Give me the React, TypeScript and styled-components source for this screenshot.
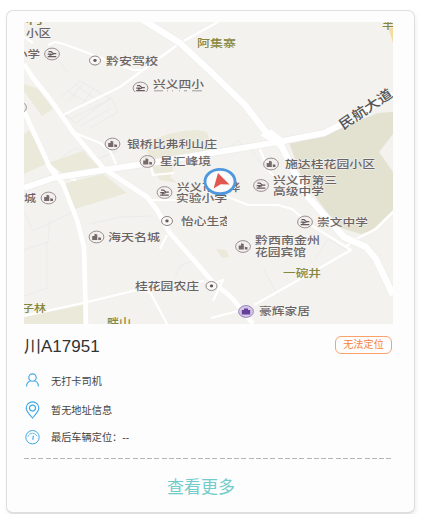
import React from "react";
import styled, { createGlobalStyle } from "styled-components";

const GlobalStyle = createGlobalStyle`
  * { box-sizing: border-box; }
  body {
    margin: 0;
    background: #fff;
    font-family: "Liberation Sans", "Noto Sans CJK SC", sans-serif;
    color: #333;
  }
`;

const Card = styled.article`
  width: 409px;
  height: 504px;
  margin: 10px 0 0 6px;
  padding: 11px 20px 0 17px;
  display: flex;
  flex-direction: column;
  background: #fdfdfd;
  border: 1px solid #dedfdf;
  border-bottom-width: 2px;
  border-radius: 7px;
  box-shadow: 1px 2px 4px rgba(0, 0, 0, 0.07);
`;

const MapView = styled.svg`
  display: block;
  width: 369px;
  height: 302px;
  flex: none;
  background: #f3f2ee;
`;

const Header = styled.header`
  display: flex;
  justify-content: space-between;
  align-items: flex-start;
  height: 43px;
  padding-top: 12px;
`;

const Plate = styled.h2`
  margin: 0;
  font-size: 17px;
  line-height: 22px;
  font-weight: 400;
  white-space: nowrap;
`;

const Status = styled.span`
  width: 57px;
  height: 18px;
  margin-right: 2px;
  border: 1px solid #fba16a;
  border-radius: 6px;
  color: #f6813c;
  font-size: 10.2px;
  line-height: 16px;
  text-align: center;
`;

const Details = styled.ul`
  list-style: none;
  margin: 0;
  padding: 0;
  display: flex;
  flex-direction: column;
  height: 91px;
`;

const Detail = styled.li<{ $height: number }>`
  display: flex;
  align-items: center;
  gap: 10px;
  height: ${(p) => p.$height}px;
  font-size: 10.2px;
  color: #444;
  white-space: nowrap;
`;

const LineIcon = styled.svg`
  width: 17px;
  height: 18px;
  fill: none;
  stroke: #43a9e5;
  stroke-width: 1.15;
`;

const Divider = styled.div`
  flex: none;
  width: 370px;
  height: 1px;
  background: repeating-linear-gradient(90deg, #b5b5b5 0 5px, transparent 5px 7.25px);
`;

const MoreButton = styled.button`
  align-self: center;
  margin: 16px 0 0;
  padding: 0;
  transform: translateX(-8px);
  border: 0;
  background: none;
  color: #70cccb;
  font: inherit;
  font-size: 17px;
  line-height: 26px;
`;

type Kind = "school" | "building" | "dot" | "shop";

const Marker = ({ x, y, kind }: { x: number; y: number; kind: Kind }) => (
  <g transform={`translate(${x} ${y})`}>
    {kind === "dot" ? (
      <>
        <ellipse rx="5.5" ry="4.5" fill="#f9f8f6" stroke="#8d8585" strokeWidth="1" />
        <ellipse rx="1.7" ry="1.4" fill="#625757" />
      </>
    ) : (
      <ellipse
        rx="7.4"
        ry="5.9"
        fill={kind === "shop" ? "#d5c9e7" : "#f3efef"}
        stroke={kind === "shop" ? "#9a83bd" : "#9a8f8f"}
        strokeWidth="1"
      />
    )}
    {kind === "school" && (
      <path d="M-3.5-2.4H-1L1.5-.2M-4.3.2H-.5M1.5-.3H4.3M-4.3 2.7H4.3M-2.6 1.5 1.5-.2" fill="none" stroke="#65595a" strokeWidth="1.25" />
    )}
    {kind === "building" && (
      <path d="M-4.3 3V-1.1H-2V-3.2L.8-2.4V3ZM1.8 3V.2L4.5.8V3Z" fill="#75696a" />
    )}
    {kind === "shop" && <path d="M-4.2-1.5H-2V-3H2V-1.5H4.2V3H-4.2Z" fill="#65409a" />}
  </g>
);

const MARKERS: [number, number, Kind][] = [
  [52, 54, "school"],
  [95, 60.5, "dot"],
  [140.5, 88, "school"],
  [48.5, 198, "building"],
  [19, 107.5, "building"],
  [112.5, 144, "building"],
  [147.5, 161.5, "building"],
  [164.5, 192.5, "school"],
  [271, 164, "building"],
  [261, 185.5, "school"],
  [167, 221, "dot"],
  [96.5, 237, "building"],
  [305, 222, "school"],
  [243, 246.5, "building"],
  [211.5, 286, "dot"],
  [246, 311.5, "shop"],
];

// text, left edge, baseline, width, and whether it names a village
const LABELS: [string, number, number, number, boolean?][] = [
  ["小区", 26, 36.5, 25],
  ["小学", 15, 57.5, 25],
  ["黔安驾校", 106, 64.5, 52],
  ["兴义四小", 153, 88, 51],
  ["阿集寨", 197, 47, 39, true],
  ["半", 382, 29, 12, true],
  ["城", 24, 201.5, 12],
  ["银桥比弗利山庄", 127, 147.5, 90],
  ["星汇峰境", 160, 165, 51],
  ["兴义市黔桦", 177, 190.5, 63],
  ["实验小学", 176, 202.3, 51],
  ["施达桂花园小区", 285, 167.5, 90],
  ["兴义市第三", 273, 183.5, 64],
  ["高级中学", 273, 195, 51],
  ["崇文中学", 317, 225.5, 51],
  ["海天名城", 108, 240.5, 52],
  ["黔西南金州", 255, 244.3, 65],
  ["花园宾馆", 255, 255.7, 51],
  ["一碗井", 283, 276.5, 38, true],
  ["桂花园农庄", 135, 290, 64],
  ["豪辉家居", 259, 315, 51],
  ["子林", 22, 311.7, 24, true],
  ["畔山", 107, 326, 24, true],
  ["村", 26, 23.5, 18, true],
];

const MAIN_ROAD = "M24 188 53 178 110 169 150 163 212 153 278 142 324 133 344 123 370 108 393 94";
const RING_ROAD =
  "M140 18 180 43 211 72 245 105 268 135 281 145 294 172 308 197 326 217 344 237 366 247 376 259 393 295";

const CityMap = () => (
  <MapView viewBox="24 22 369 302" preserveAspectRatio="none">
    <defs>
      <clipPath id="poi-edge">
        <rect x="176" y="210" width="51" height="20" />
      </clipPath>
      <clipPath id="tile-edge">
        <rect x="130" y="80" width="20" height="12" />
      </clipPath>
    </defs>
    <rect x="24" y="22" width="369" height="302" fill="#f3f2ee" />
    <path
      d="M24 84 38 89 53 109 42 116 24 91ZM24 134 29 130 48 163 24 174ZM48 163 83 151 101 169 65 175ZM63 184 103 174 127 193 75 209ZM146 144 Q170 130 197 130 L207 132 213 151 150 162ZM150 166 177 160 170 177 177 183 160 180ZM24 317 83 305V324H24ZM216 249 226 250 229 257 222 258Z"
      fill="#ebe9da"
    />
    <path d="M289 142 328 133 378 113 393 112V134L379 152 393 172V210L371 231 361 234 341 228 326 211 302 178Z" fill="#e3e1d0" />
    <path d="M387 23H393V43Z" fill="#f4dc9c" />
    <path
      d="M60 98 80 81 111 99 93 109M68 91 91 105M76 85 99 102M84 82 69 101M94 88 79 109M55 55 67 72M63 113 76 123 111 97 118 112 90 128M71 119 101 103M80 126 110 109M62 157 76 148 100 158 118 151M24 212 33 231 48 224 73 212M24 250 48 242 50 219M24 296 47 288V242M89 224 121 217 153 216M231 147 238 140 247 149M251 149 264 168M175 276 180 266 194 260M264 270 278 296M315 259 328 239 347 250"
      fill="none"
      stroke="#ebebec"
      strokeWidth="1"
    />
    <path
      d="M24 37 33 43M48 45 55 42 64 44 133 70 143 70M218 22 180 43 143 70 120 87 63 115M75 133 100 143 110 151 118 168M50 165 61 176 76 180M150 200 200 200 223 195 248 205 278 205 292 209 311 225 351 250 311 273 254 305M259 147 269 171 276 178M167 235 160 249M24 316 83 303 137 290 150 292 167 324M137 290 204 281M211 318 242 310M393 212 376 229 358 238 345 247M151 166 153 175 174 173M211 284 223 280 213 301"
      fill="none"
      stroke="#fff"
      strokeWidth="2.2"
      strokeLinejoin="round"
    />
    <g fill="none" stroke="#ebebe9" strokeWidth="7.5" strokeLinejoin="round">
      <path d={MAIN_ROAD} />
      <path d={RING_ROAD} />
    </g>
    <g fill="none" stroke="#fff" strokeLinejoin="round">
      <path
        d="M24 64 33 78 50 99 73 132 103 168 147 197 157 210 170 233 212 281 232 298 253 324M24 111 50 168 63 184 77 220 84 247 86 324"
        strokeWidth="4.6"
      />
      <path d={MAIN_ROAD} strokeWidth="6" />
      <path d={RING_ROAD} strokeWidth="6.5" />
      <path d="M261 135 271 130 283 139 279 147Z" fill="#fff" />
    </g>
    {MARKERS.map(([x, y, kind]) => (
      <g key={`${x}-${y}`} clipPath={y === 88 ? "url(#tile-edge)" : undefined}>
        <Marker x={x} y={y} kind={kind} />
      </g>
    ))}
    <g fontFamily='"Noto Sans CJK SC", sans-serif' fontSize="10.6" fontWeight="500" stroke="#f6f5f2" strokeWidth="1" paintOrder="stroke">
      {LABELS.map(([text, x, y, width, village]) => (
        <text
          key={`${text}-${y}`}
          transform={`translate(${x} ${y})`}
          textLength={width}
          lengthAdjust="spacingAndGlyphs"
          fill={village ? "#858640" : "#6b6464"}
        >
          {text}
        </text>
      ))}
      <g clipPath="url(#poi-edge)">
        <text x="181" y="224.5" textLength="51" lengthAdjust="spacingAndGlyphs" fill="#6b6464">
          怡心生态
        </text>
      </g>
      <text transform="translate(343 130) rotate(-34)" textLength="61" lengthAdjust="spacingAndGlyphs" fontSize="13.5" fill="#555">
        民航大道
      </text>
    </g>
    <path d="M154 90.8H163M167 90.8H168M172 90.8H173M179 90.8H180M184 90.8H187M192 90.8H202" stroke="#888" strokeWidth=".8" />
    <ellipse cx="220" cy="181.5" rx="15" ry="12.2" fill="#fbfbfb" stroke="#4f98df" strokeWidth="2.8" />
    <path d="M218 173 229.5 184.5 220.6 184.2 213.6 188.4Z" fill="#e15750" />
  </MapView>
);

export default function App() {
  return (
    <>
      <GlobalStyle />
      <Card>
        <CityMap />
        <Header>
          <Plate>川A17951</Plate>
          <Status>无法定位</Status>
        </Header>
        <Details>
          <Detail $height={27}>
            <LineIcon viewBox="0 0 17 18">
              <circle cx="8.5" cy="5.5" r="3.7" />
              <path d="M2.5 14.5C2.7 11 4.8 9.2 7 8.8M10 8.8C12.3 9.2 14.3 11 14.5 14.5" />
            </LineIcon>
            无打卡司机
          </Detail>
          <Detail $height={31}>
            <LineIcon viewBox="0 0 17 18">
              <path d="M8.5 17C6 13.8 2.2 10.8 2.2 7.1A6.3 6.3 0 0 1 14.8 7.1C14.8 10.8 11 13.8 8.5 17Z" />
              <circle cx="8.5" cy="7.1" r="3" />
            </LineIcon>
            暂无地址信息
          </Detail>
          <Detail $height={23}>
            <LineIcon viewBox="0 0 17 18">
              <circle cx="8.5" cy="9.2" r="6.7" strokeWidth="1" />
              <path d="M4 8.6A4.7 4.7 0 0 1 13 8.6" strokeWidth=".9" strokeDasharray="2.4 .5" />
              <path d="M9.3 7.8 8.8 11.8" strokeWidth="1.2" />
            </LineIcon>
            最后车辆定位：--
          </Detail>
        </Details>
        <Divider />
        <MoreButton type="button">查看更多</MoreButton>
      </Card>
    </>
  );
}
